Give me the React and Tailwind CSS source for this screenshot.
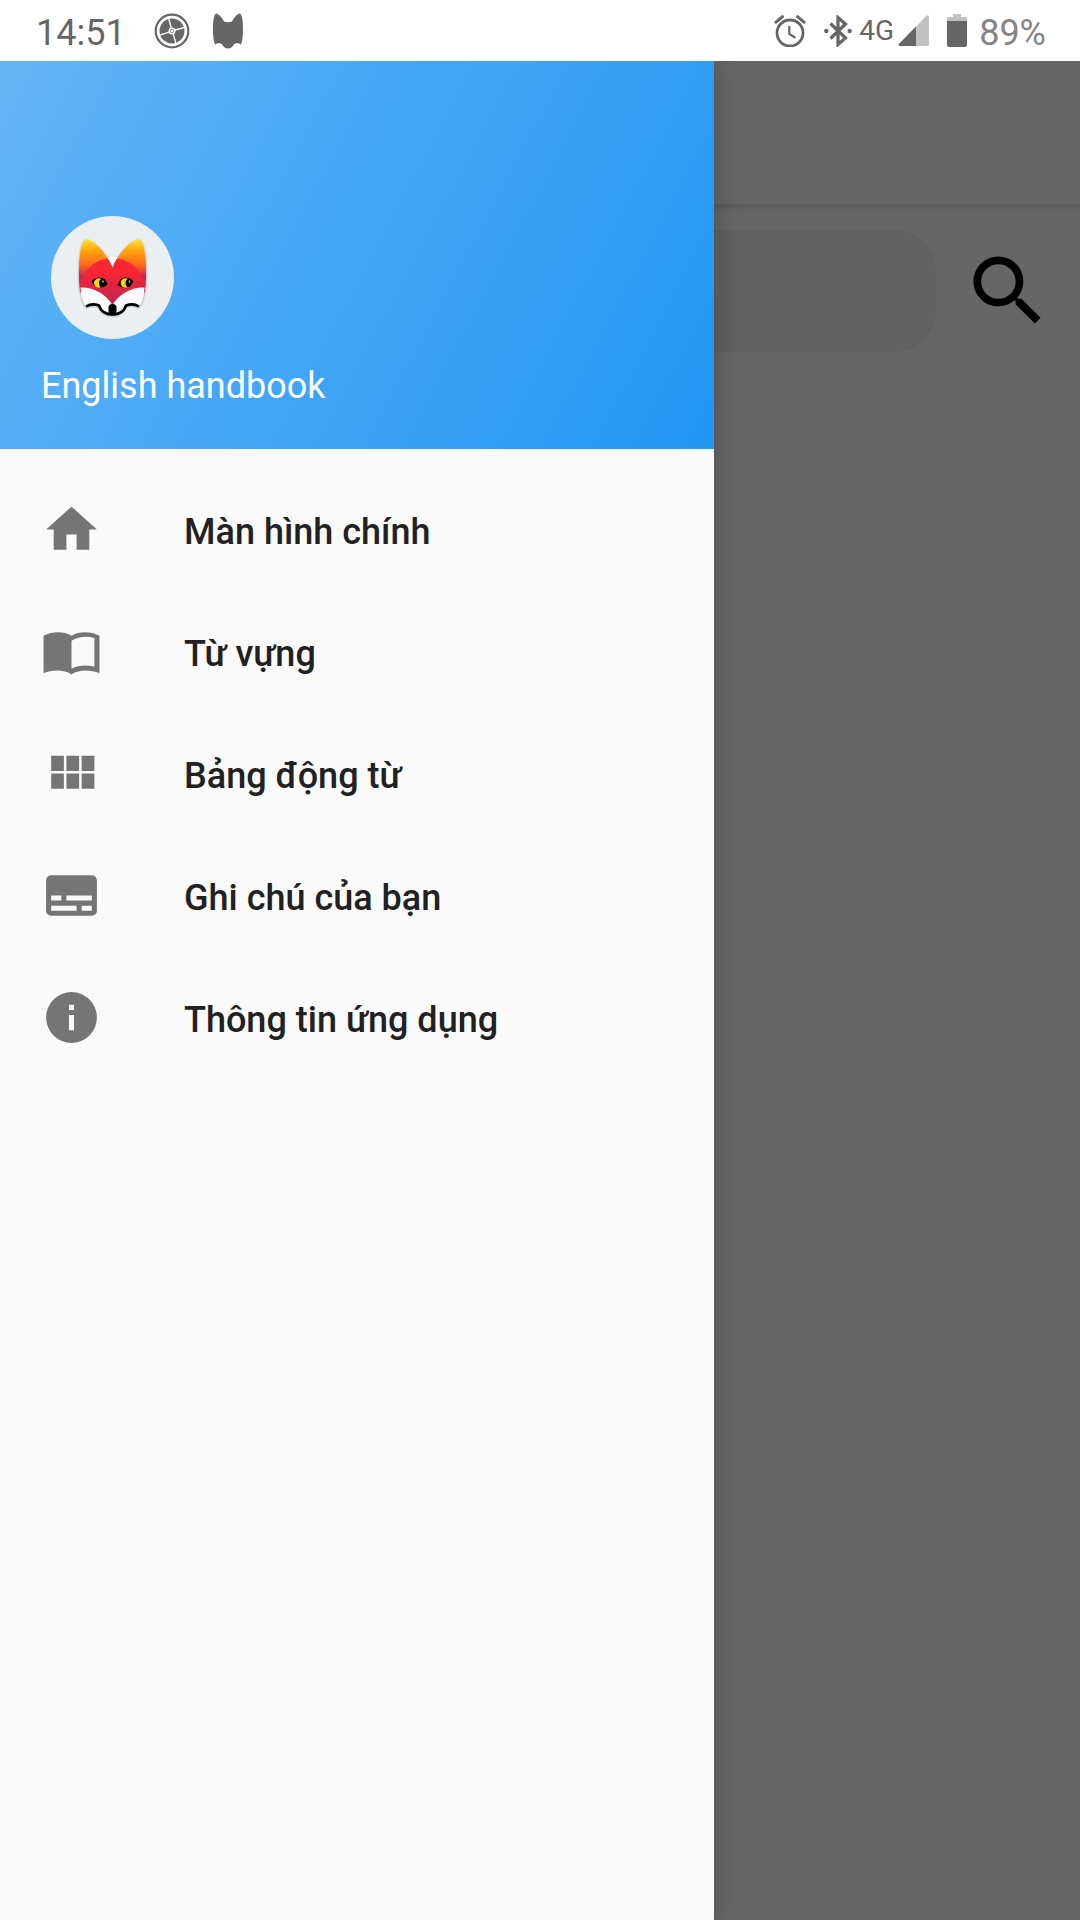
import React from "react";

function HomeIcon() {
  return <path d="M10 20v-6h4v6h5v-8h3L12 3 2 12h3v8z" />;
}

function BookIcon() {
  return (
    <path
      fillRule="evenodd"
      d="M1 5.800C4.500 4 9 4 12 5.800 15 4 19.500 4 23 5.800V20.600C19.500 19.100 15 19.100 12 21 9 19.100 4.500 19.100 1 20.600ZM12 7.800V18.800C14.600 17.400 18 17.200 21 18V6.700C18 5.800 14.600 6.100 12 7.800Z"
    />
  );
}

function GridIcon() {
  return <path d="M4 5h5v6H4zM10 5h5v6h-5zM16 5h5v6h-5zM4 12h5v6H4zM10 12h5v6h-5zM16 12h5v6h-5z" />;
}

function SubtitlesIcon() {
  return (
    <path
      fillRule="evenodd"
      d="M20 4H4a2 2 0 0 0-2 2v12a2 2 0 0 0 2 2h16a2 2 0 0 0 2-2V6a2 2 0 0 0-2-2zM4 12h4v2H4zM4 16h10v2H4zM16 16h4v2h-4zM10 12h10v2H10z"
    />
  );
}

function InfoIcon() {
  return (
    <path
      fillRule="evenodd"
      d="M12 2a10 10 0 1 0 0 20a10 10 0 0 0 0-20zM11 11h2v6h-2zM11 7h2v2h-2z"
    />
  );
}

const menu = [
  { label: "Màn hình chính", Icon: HomeIcon },
  { label: "Từ vựng", Icon: BookIcon },
  { label: "Bảng động từ", Icon: GridIcon },
  { label: "Ghi chú của bạn", Icon: SubtitlesIcon },
  { label: "Thông tin ứng dụng", Icon: InfoIcon },
];

function StatusBar() {
  return (
    <header className="flex h-[61px] items-center justify-between bg-white pr-[34px] pl-9 text-[#666666]">
      <div className="flex items-center">
        <span className="pt-1 text-[36px] leading-none">14:51</span>
        <svg className="ml-7 size-9" viewBox="0 0 36 36" fill="none" aria-hidden="true">
          <circle cx="18" cy="18" r="16.300" stroke="currentColor" strokeWidth="2.200" />
          <circle cx="18" cy="18" r="12.500" fill="currentColor" />
          <path d="M17.200 15 14.800 5.500M21 17l9.500-2.500M19.200 21l2.600 9M15 19.200l-9.500 3" stroke="#fff" strokeWidth="1.300" />
          <circle cx="18" cy="18" r="2.700" fill="currentColor" stroke="#fff" strokeWidth="1.600" />
          <circle cx="18" cy="18" r="1.200" fill="#fff" />
        </svg>
        <svg className="ml-[22px] h-9 w-8" viewBox="0 0 32 36" fill="currentColor" aria-hidden="true">
          <path d="M4 .5C6.500.5 10 4.500 12 8.500Q16 10 20 8.500C22 4.500 25.500.5 28 .5 30.500 2 31 10 31 16 31 22 30.600 28 29 31.500 26.500 29.800 24 30 22.200 31 20.500 34 18.500 35.600 16 35.600S11.500 34 9.800 31C8 30 5.500 29.800 3 31.500 1.400 28 1 22 1 16 1 10 1.500 2 4 .5Z" />
        </svg>
      </div>
      <div className="flex items-center">
        <svg className="size-8" viewBox="0 0 32 32" fill="none" stroke="currentColor" aria-hidden="true">
          <circle cx="16" cy="18" r="13" strokeWidth="2.800" />
          <path d="M15.300 11v8l6 3.800" strokeWidth="2.200" />
          <path d="M2 7.200 8.500 1.700M30 7.200l-6.500-5.500" strokeWidth="3" strokeLinecap="round" />
        </svg>
        <svg className="ml-[18px] h-8 w-7" viewBox="0 0 28 32" fill="none" stroke="currentColor" aria-hidden="true">
          <path d="m6.500 8.500 15 14.500-7.500 6.500v-27L21.500 9l-15 14.500" strokeWidth="3.200" />
          <circle cx="2.300" cy="16" r="2.200" fill="currentColor" stroke="none" />
          <circle cx="25.700" cy="16" r="2.200" fill="currentColor" stroke="none" />
        </svg>
        <span className="ml-[7px] text-[28px] leading-none">4G</span>
        <svg className="ml-1 size-[31px]" viewBox="0 0 31 31" aria-hidden="true">
          <path d="M1 31Q0 30 1 29L28.500.8Q31-1 31 2V29.500Q31 31 29.500 31Z" fill="#c2c2c2" />
          <path d="M1.500 31Q0 30 1 29L18 11.500V31Z" fill="currentColor" />
        </svg>
        <svg className="ml-[18px] h-[33px] w-5" viewBox="0 0 20 33" aria-hidden="true">
          <path d="M6 0h8v3h5q1 0 1 1v5H0V4q0-1 1-1h5z" fill="#c2c2c2" />
          <path d="M0 7h20v24q0 2-2 2H2q-2 0-2-2z" fill="currentColor" />
        </svg>
        <span className="ml-3 pt-1 text-[36px] leading-none text-[#858585]">89%</span>
      </div>
    </header>
  );
}

function FoxAvatar() {
  return (
    <svg className="ml-[10px] size-[123px]" viewBox="0 0 123 123" role="img" aria-label="Fox">
      <defs>
        <linearGradient id="ear" x1="0" y1="0" x2="0" y2="1">
          <stop offset="0" stopColor="#ffe53b" />
          <stop offset=".15" stopColor="#ffa40c" />
          <stop offset=".33" stopColor="#ff6a1c" />
          <stop offset=".48" stopColor="#c8254c" />
          <stop offset="1" stopColor="#c4254f" />
        </linearGradient>
        <linearGradient id="face" x1="0" y1="0" x2="0" y2="1">
          <stop offset="0" stopColor="#ff2533" />
          <stop offset=".25" stopColor="#f32636" />
          <stop offset=".75" stopColor="#b82458" />
        </linearGradient>
        <clipPath id="mask">
          <path d="M35 23C43 24 55 36 61.500 51.500 68 36 80 24 88 23 93 25 95 40 95 56 95 66 94.500 72 93.500 76L61.500 92 29.500 76C28.500 72 28 66 28 56 28 40 30 25 35 23Z" />
        </clipPath>
        <filter id="shade" x="-20%" y="-20%" width="140%" height="140%">
          <feDropShadow dx="0" dy="1" stdDeviation="1" floodOpacity=".45" />
        </filter>
      </defs>
      <circle cx="61.500" cy="61.500" r="61.500" fill="#ebeff2" />
      <g filter="url(#shade)">
        <path d="M56 41.500Q61.500 39 67 41.500L61.500 56Z" fill="#fff" />
        <g clipPath="url(#mask)">
          <rect x="28" y="23" width="68" height="78" fill="url(#ear)" />
          <circle cx="61.500" cy="75" r="33" fill="url(#face)" />
        </g>
        <path d="M29.500 71.500C43 71 56 79 61.500 89 67 79 80 71 93.500 71.500 93 79 91.500 86 88 91 84 88.500 78 88 75 90 72 96 68 99 61.500 99S51 96 48 90C45 88 39 88.500 35 91 31.500 86 30 79 29.500 71.500Z" fill="#fafafa" />
      </g>
      <path d="M35 90.500C39 88 44 88 48 89.500 50 96 55 98.500 61.500 98.500S73 96 75 89.500C79 88 84 88 88 90.500" fill="none" stroke="#000" strokeWidth="2.600" />
      <rect x="57.500" y="88" width="8" height="11" rx="4" />
      <path d="M40.500 65.500C44 61 50 60 54 63.500L56.500 68C53 72.500 45 74 40.500 65.500ZM82.500 65.500C79 61 73 60 69.500 63.500L66.500 69C71 72.500 79 73 82.500 65.500Z" />
      <circle cx="47.700" cy="67" r="4.700" fill="#fdd800" />
      <circle cx="74.300" cy="67" r="4.700" fill="#fdd800" />
      <ellipse cx="51" cy="67" rx="3" ry="4" />
      <ellipse cx="77.500" cy="67" rx="3" ry="4" />
      <circle cx="52" cy="65.500" r=".9" fill="#ccc" />
      <circle cx="78.500" cy="65.500" r=".9" fill="#ccc" />
    </svg>
  );
}

function SearchPage() {
  return (
    <main className="col-start-1 row-start-1 flex flex-col bg-white">
      <div className="h-[143px] bg-white shadow-[0_3px_8px_rgba(0,0,0,0.15)]" />
      <form className="mt-[26px] flex items-center gap-[26px] pr-[26px] pl-6" onSubmit={(e) => e.preventDefault()}>
        <input
          type="search"
          aria-label="Tìm kiếm"
          className="h-[122px] min-w-0 flex-1 rounded-[41px] bg-[#f3f3f3] px-8 text-[36px] outline-none"
        />
        <button type="submit" aria-label="Tìm" className="text-black">
          <svg className="block size-[92px]" viewBox="0 0 24 24" fill="currentColor" aria-hidden="true">
            <path d="M15.500 14h-.790l-.280-.270C15.410 12.590 16 11.110 16 9.500 16 5.910 13.090 3 9.500 3S3 5.910 3 9.500 5.910 16 9.500 16c1.610 0 3.090-.590 4.230-1.570l.270.280v.790l5 4.990L20.490 19l-4.990-5zm-6 0C7.010 14 5 11.990 5 9.500S7.010 5 9.500 5 14 7.010 14 9.500 11.990 14 9.500 14z" />
          </svg>
        </button>
      </form>
    </main>
  );
}

function Drawer() {
  return (
    <aside className="z-20 col-start-1 row-start-1 w-[714px] max-w-[85%] bg-[#fafafa] shadow-[0_0_26px_rgba(0,0,0,0.25)]">
      <div className="bg-[linear-gradient(118deg,#64b5f6,#42a5f5_50%,#2196f3)] px-[41px] pt-[155px] pb-[39px] text-white">
        <FoxAvatar />
        <p className="mt-[23px] text-[36px] leading-[48px]">English handbook</p>
      </div>
      <nav className="py-[19px]">
        <ul>
          {menu.map(({ label, Icon }) => (
            <li key={label}>
              <a href="#" className="flex h-[122px] items-center gap-[82px] px-[41px] text-[36px] font-medium text-[#212121]">
                <svg className="size-[61px] shrink-0 text-[#757575]" viewBox="0 0 24 24" fill="currentColor" aria-hidden="true">
                  <Icon />
                </svg>
                <span className="pt-[6px]">{label}</span>
              </a>
            </li>
          ))}
        </ul>
      </nav>
    </aside>
  );
}

export default function App() {
  return (
    <div className="flex min-h-screen flex-col font-[Roboto,sans-serif]">
      <StatusBar />
      <div className="grid flex-1 grid-cols-1 overflow-hidden">
        <SearchPage />
        <div className="z-10 col-start-1 row-start-1 bg-black/60" />
        <Drawer />
      </div>
    </div>
  );
}
